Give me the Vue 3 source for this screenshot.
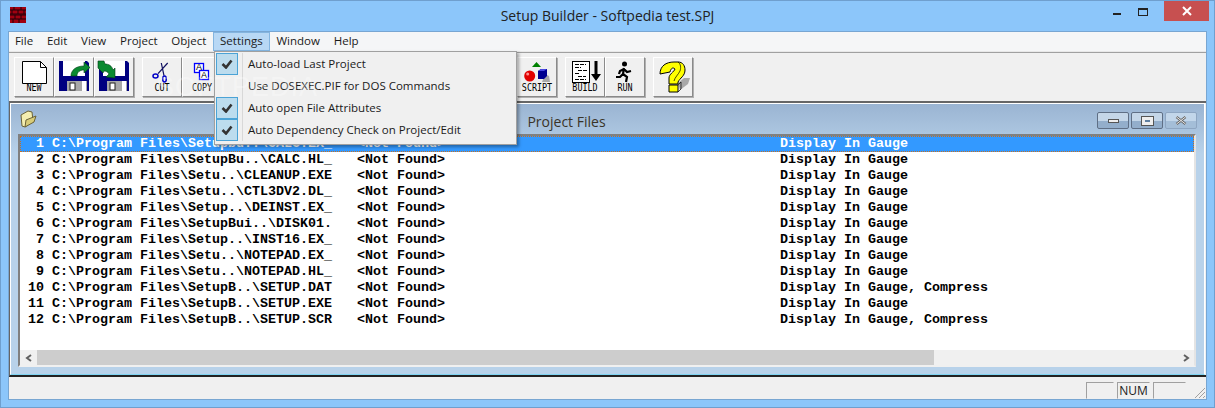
<template>
  <div class="win">
    <div class="titlebar">
      <svg class="app-icon" width="16" height="16" viewBox="0 0 16 16">
        <rect width="16" height="16" fill="#a00010" />
        <path d="M0 3h16M0 7h16M0 8h16M0 12h16M4 0v3M11 0v3M2 3v4M8 3v4M14 3v4M5 8v4M11 8v4M3 12v4M9 12v4" stroke="#200008" stroke-width="1" fill="none" />
      </svg>
      <div class="title">Setup Builder - Softpedia test.SPJ</div>
      <div class="caption">
        <span class="cap-btn"><i class="cap-min"></i></span>
        <span class="cap-btn"><i class="cap-max"></i></span>
        <span class="cap-close">
          <svg width="10" height="10" viewBox="0 0 10 10"><path d="M1 1l8 8M9 1l-8 8" stroke="#fff" stroke-width="2" /></svg>
        </span>
      </div>
    </div>

    <div class="client">
      <div class="menubar">
        <span v-for="m in menus" :key="m" class="menu-item" :class="{ open: m === 'Settings' }">{{ m }}</span>
      </div>

      <div class="toolbar">
        <div class="tool-group">
          <button class="tool">
            <svg width="38" height="38" viewBox="0 0 38 38">
              <path d="M7.500 3.500h18l6 6v16h-24z" fill="#fff" stroke="#000" />
              <path d="M25.500 3.500v6h6" fill="none" stroke="#000" />
            </svg>
            <span class="tool-label">NEW</span>
          </button>
          <button class="tool">
            <svg width="38" height="38" viewBox="0 0 38 38">
              <path d="M4 3h28l2 2v28H4z" fill="#000080" />
              <rect x="8" y="3" width="22" height="15" fill="#fff" />
              <rect x="12" y="23" width="20" height="10" fill="#a8a8a8" />
              <rect x="15" y="25" width="5" height="7" fill="#fff" stroke="#202020" />
              <rect x="27" y="23" width="4" height="10" fill="#fff" />
              <path d="M16 18c0-6 5-10 13-10V4l6 5.500-6 5.500v-3c-4 0-7 2-7 6z" fill="#0a8a30" stroke="#003a14" stroke-width=".6" />
            </svg>
          </button>
          <button class="tool">
            <svg width="38" height="38" viewBox="0 0 38 38">
              <path d="M4 3h28l2 2v28H4z" fill="#000080" />
              <rect x="8" y="3" width="22" height="15" fill="#fff" />
              <rect x="12" y="23" width="20" height="10" fill="#a8a8a8" />
              <rect x="15" y="25" width="5" height="7" fill="#fff" stroke="#202020" />
              <rect x="27" y="23" width="4" height="10" fill="#fff" />
              <path d="M3 3h6l1 3c4 0 7 2 8 6l2-2v10l-9-1 3-3c-1-2-3-3-5-3l-1 2-5-5z" fill="#0a8a30" stroke="#003a14" stroke-width=".6" />
            </svg>
          </button>
        </div>
        <div class="tool-group">
          <button class="tool">
            <svg width="38" height="38" viewBox="0 0 38 38">
              <path d="M24.700 5L15 15.700M18.300 5L21 17.700" stroke="#101060" stroke-width="1.200" fill="none" />
              <ellipse cx="12.500" cy="18" rx="2.500" ry="2" fill="none" stroke="#0000c8" stroke-width="1.500" />
              <ellipse cx="21.500" cy="21" rx="1.800" ry="3" fill="none" stroke="#0000c8" stroke-width="1.500" />
            </svg>
            <span class="tool-label">CUT</span>
          </button>
          <button class="tool">
            <svg width="38" height="38" viewBox="0 0 38 38">
              <rect x="11.500" y="5.500" width="9" height="9" fill="#fff" stroke="#0000ff" stroke-width="1.300" />
              <rect x="16.500" y="12.500" width="9" height="9" fill="#fff" stroke="#0000ff" stroke-width="1.300" />
            </svg>
            <span class="tool-glyph a1">A</span>
            <span class="tool-glyph a2">A</span>
            <span class="tool-label">COPY</span>
          </button>
        </div>
        <div class="tool-group pushed">
          <button class="tool">
            <svg width="38" height="38" viewBox="0 0 38 38">
              <path d="M14 9l4.500-5 4.500 5z" fill="#008000" />
              <path d="M27 16l4 2 1 6h-8z" fill="#a8a8a8" />
              <circle cx="11.700" cy="18" r="5.500" fill="#e00000" />
              <circle cx="9.700" cy="16" r="1.500" fill="#ff9090" />
              <path d="M20 13l3-2h6v7l-3 3h-6z" fill="#000090" />
              <path d="M23 11h6l-3 2h-6z" fill="#4848e0" />
            </svg>
            <span class="tool-label">SCRIPT</span>
          </button>
        </div>
        <div class="tool-group">
          <button class="tool">
            <svg width="38" height="38" viewBox="0 0 38 38">
              <rect x="6.500" y="3.500" width="17" height="21" fill="#fff" stroke="#000" />
              <path d="M9 6.500h11M9 9.500h6M12 12.500h9M9 15.500h5M12 18.500h8M9 21.500h11" stroke="#000" stroke-dasharray="4 1" />
              <path d="M28.500 3h3v13h3.500l-5 7-5-7h3.500z" fill="#000" />
            </svg>
            <span class="tool-label">BUILD</span>
          </button>
          <button class="tool">
            <svg width="38" height="38" viewBox="0 0 38 38">
              <circle cx="18.500" cy="6" r="2.500" fill="#000" />
              <path d="M18 10l-1 6 4 3-1 5M17 16l-3 3-4 0M18 11l-4 2-1 3M18 11l3 3 4-1" stroke="#000" stroke-width="2.200" fill="none" />
            </svg>
            <span class="tool-label">RUN</span>
          </button>
        </div>
        <div class="tool-group">
          <button class="tool">
            <svg width="38" height="38" viewBox="0 0 38 38">
              <path d="M24 25l6-5h6l-2 6-8 6z" fill="#a8a8a8" />
              <path d="M6 16C6 8 12 4 20 4h4c5 0 7 4 7 8 0 6-5 8-7 12v2h-9v-6c0-4 5-6 6-9-2-2-4-1-5 3z" fill="#ffff00" stroke="#000" />
              <path d="M15 27h9v7h-9z" fill="#ffff00" stroke="#000" />
              <path d="M24 4c3 2 3 6 2 9-2 4-5 6-6 10M24 27l3-3v7l-3 3" fill="none" stroke="#000" stroke-width=".7" />
            </svg>
          </button>
        </div>
      </div>

      <div class="mdi">
        <div class="child">
          <div class="child-title">
            <svg class="folder" width="18" height="20" viewBox="0 0 18 20">
              <path d="M1 6l7-4 4 1 1 9-8 6-3-1z" fill="#f4eeb0" stroke="#6a6238" />
              <path d="M5 18l1-7 10-4-2 6z" fill="#d8cc78" stroke="#6a6238" />
            </svg>
            <span class="child-name">Project Files</span>
            <div class="child-btns">
              <span class="mini"><i class="mini-min"></i></span>
              <span class="mini"><i class="mini-max"></i></span>
              <span class="mini off">
                <svg width="12" height="9" viewBox="0 0 12 9"><path d="M1.500 1l9 7M10.500 1l-9 7" stroke="#666" stroke-width="2.500" /><path d="M1.500 1l9 7M10.500 1l-9 7" stroke="#e8e8e8" stroke-width="1" /></svg>
              </span>
            </div>
          </div>
          <div class="list">
            <div class="rows">
              <div v-for="(r, i) in rows" :key="i" class="row" :class="{ sel: i === 0 }">
                <span class="num">{{ i + 1 }}</span>
                <span class="path">{{ r[0] }}</span>
                <span class="found">&lt;Not Found&gt;</span>
                <span>{{ r[1] }}</span>
              </div>
            </div>
            <div class="hscroll">
              <span class="arrow">
                <svg width="8" height="8" viewBox="0 0 8 8"><path d="M6 1L2 4l4 3" fill="none" stroke="#606060" stroke-width="2" /></svg>
              </span>
              <div class="track"><div class="thumb"></div></div>
              <span class="arrow">
                <svg width="8" height="8" viewBox="0 0 8 8"><path d="M2 1l4 3-4 3" fill="none" stroke="#606060" stroke-width="2" /></svg>
              </span>
            </div>
          </div>
        </div>
      </div>

      <div class="statusbar">
        <span class="pane p1"></span>
        <span class="pane p2">NUM</span>
        <span class="pane p3"></span>
        <svg class="grip" width="12" height="12" viewBox="0 0 12 12">
          <path d="M11 1L1 11M11 5l-6 6M11 9l-2 2" stroke="#a0a0a0" fill="none" />
        </svg>
      </div>
    </div>

    <div class="dropdown">
      <div v-for="d in dropdown" :key="d.label" class="drop-item">
        <span class="check" :class="{ on: d.on }">
          <svg v-if="d.on" width="12" height="10" viewBox="0 0 12 10"><path d="M1.500 5l3.500 3.500L10.500 1.500" fill="none" stroke="#333" stroke-width="2.600" /></svg>
        </span>
        <span class="drop-label">{{ d.label }}</span>
      </div>
    </div>
    <div class="watermark">SOFTPEDIA</div>
  </div>
</template>

<script setup>
const menus = ['File', 'Edit', 'View', 'Project', 'Object', 'Settings', 'Window', 'Help']

const dropdown = [
  { label: 'Auto-load Last Project', on: true },
  { label: 'Use DOSEXEC.PIF for DOS Commands', on: false },
  { label: 'Auto open File Attributes', on: true },
  { label: 'Auto Dependency Check on Project/Edit', on: true }
]

const gauge = 'Display In Gauge'
const both = 'Display In Gauge, Compress'

const rows = [
  ['C:\\Program Files\\Setupbu..\\CALC.EX_', gauge],
  ['C:\\Program Files\\SetupBu..\\CALC.HL_', gauge],
  ['C:\\Program Files\\Setu..\\CLEANUP.EXE', gauge],
  ['C:\\Program Files\\Setu..\\CTL3DV2.DL_', gauge],
  ['C:\\Program Files\\Setup..\\DEINST.EX_', gauge],
  ['C:\\Program Files\\SetupBui..\\DISK01.', gauge],
  ['C:\\Program Files\\Setup..\\INST16.EX_', gauge],
  ['C:\\Program Files\\Setu..\\NOTEPAD.EX_', gauge],
  ['C:\\Program Files\\Setu..\\NOTEPAD.HL_', gauge],
  ['C:\\Program Files\\SetupB..\\SETUP.DAT', both],
  ['C:\\Program Files\\SetupB..\\SETUP.EXE', gauge],
  ['C:\\Program Files\\SetupB..\\SETUP.SCR', both]
]
</script>

<style>
html, body {
  margin: 0;
  background: #8cc6fa;
}
</style>

<style scoped>
.win {
  position: relative;
  width: 1215px;
  height: 408px;
  box-sizing: border-box;
  display: flex;
  flex-direction: column;
  background: #8cc6fa;
  border: 1px solid #6f9fce;
  overflow: hidden;
  font-family: "Open Sans", "Noto Sans", sans-serif;
  color: #1a1a1a;
}

.titlebar {
  height: 30px;
  flex-shrink: 0;
  position: relative;
  display: flex;
  align-items: flex-start;
}

.app-icon {
  margin: 6px 0 0 9px;
}

.title {
  position: absolute;
  left: 0;
  right: 0;
  top: 5px;
  text-align: center;
  font-size: 14px;
  line-height: 20px;
  color: #222;
}

.caption {
  margin-left: auto;
  margin-right: 5px;
  display: flex;
}

.cap-btn {
  width: 26px;
  height: 20px;
  position: relative;
}

.cap-min {
  position: absolute;
  left: 1px;
  top: 12px;
  width: 8px;
  height: 2px;
  background: #222;
}

.cap-max {
  position: absolute;
  left: 0;
  top: 7px;
  width: 8px;
  height: 5px;
  border: 1px solid #222;
  border-top-width: 2px;
}

.cap-close {
  width: 45px;
  height: 20px;
  background: #c75050;
  display: flex;
  align-items: center;
  justify-content: center;
}

.client {
  flex: 1;
  margin: 0 7px 7px 7px;
  display: flex;
  flex-direction: column;
  background: #f0f0f0;
  border: 1px solid #78a6d2;
  min-height: 0;
}

.menubar {
  height: 19px;
  flex-shrink: 0;
  display: flex;
  background: #f5f6f7;
  border-bottom: 1px solid #e8e8e8;
  font-size: 11.500px;
  line-height: 18px;
}

.menu-item {
  padding: 0 6.900px;
}

.menu-item:first-child {
  margin-left: -1px;
}

.menu-item.open {
  background: #b8d8f5;
  box-shadow: inset 0 0 0 1px #84b5e0;
}

.toolbar {
  height: 49px;
  flex-shrink: 0;
  box-sizing: border-box;
  display: flex;
  align-items: flex-start;
  gap: 8px;
  padding: 4px 0 0 5px;
  background: #f0f0f0;
  border-top: 1px solid #a0a0a0;
}

.tool-group {
  display: flex;
}

.tool-group.pushed {
  margin-left: 287px;
}

.tool {
  position: relative;
  width: 40px;
  height: 40px;
  padding: 0;
  margin: 0;
  display: block;
  background: #f0f0f0;
  border: 1px solid;
  border-color: #fff #8a8a8a #8a8a8a #fff;
  box-shadow: 1px 1px 0 #b0b0b0;
}

.tool svg {
  display: block;
}

.tool-label {
  position: absolute;
  left: -10px;
  right: -10px;
  bottom: 4px;
  text-align: center;
  font-family: "DejaVu Sans Mono", monospace;
  font-size: 10.500px;
  line-height: 9px;
  color: #000;
  transform: scaleX(0.8);
}

.tool-glyph {
  position: absolute;
  font-family: "Liberation Sans", sans-serif;
  font-size: 9px;
  line-height: 9px;
  color: #000;
}

.a1 { left: 13px; top: 5px; }
.a2 { left: 18px; top: 13px; }

.mdi {
  flex: 1;
  min-height: 0;
  display: flex;
  border-top: 2px solid #666;
  border-left: 1px solid #666;
  border-bottom: 2px solid #222;
}

.child {
  flex: 1;
  min-width: 0;
  margin: 0 1px 0 0;
  box-sizing: border-box;
  display: flex;
  flex-direction: column;
  padding: 0 7px 7px;
  border: 1px solid #fff;
  border-bottom-color: #7fd4f2;
  background: linear-gradient(#9ab4d2, #b8d2ea 50px);
}

.child-title {
  height: 30px;
  flex-shrink: 0;
  position: relative;
  display: flex;
  align-items: center;
}

.folder {
  margin-left: 2px;
}

.child-name {
  position: absolute;
  left: 0;
  right: 82px;
  top: 8px;
  text-align: center;
  font-size: 14px;
  line-height: 19px;
  color: #3a3428;
}

.child-btns {
  position: absolute;
  right: 0;
  top: 8px;
  display: flex;
  gap: 2px;
}

.mini {
  width: 30px;
  height: 15px;
  border: 1px solid #5f6f85;
  border-radius: 2px;
  background: linear-gradient(#c4d6e8 50%, #93aecb 50%);
  display: flex;
  align-items: center;
  justify-content: center;
}

.mini.off {
  border-color: #8ea6c2;
  background: linear-gradient(#c2d6ea 50%, #a4bed8 50%);
}

.mini-min {
  width: 9px;
  height: 2px;
  background: #eee;
  border: 1px solid #555;
}

.mini-max {
  width: 5px;
  height: 2px;
  border: 3px solid #eee;
  outline: 1px solid #555;
  background: #5f7fa0;
}

.list {
  flex: 1;
  min-height: 0;
  display: flex;
  flex-direction: column;
  background: #fff;
  border-top: 2px solid #808080;
  border-left: 2px solid #808080;
  border-right: 2px solid #e4e4e4;
  border-bottom: 2px solid #f0f0f0;
  margin-right: 1px;
}

.rows {
  flex: 1;
  min-height: 0;
  font-family: "Liberation Mono", monospace;
  font-weight: 700;
  font-size: 13.330px;
  color: #000;
}

.row {
  height: 16px;
  line-height: 15px;
  display: flex;
  white-space: pre;
}

.row.sel {
  background: #3399ff;
  color: #fff;
  outline: 1px dotted #c87020;
  outline-offset: -1px;
}

.num {
  width: 24px;
  text-align: right;
  margin-right: 8px;
}

.path {
  width: 305px;
}

.found {
  width: 423px;
}

.hscroll {
  height: 15px;
  flex-shrink: 0;
  display: flex;
  background: #f0f0f0;
}

.arrow {
  width: 17px;
  display: flex;
  align-items: center;
  justify-content: center;
}

.track {
  flex: 1;
}

.thumb {
  width: 897px;
  height: 100%;
  background: #cdcdcd;
}

.statusbar {
  height: 22px;
  flex-shrink: 0;
  display: flex;
  justify-content: flex-end;
  gap: 3px;
  padding-top: 5px;
  box-sizing: border-box;
  position: relative;
  background: #f0f0f0;
}

.pane {
  height: 17px;
  box-sizing: border-box;
  border: 1px solid;
  border-color: #a0a0a0 #f0f0f0 #f0f0f0 #a0a0a0;
  font-size: 12px;
  line-height: 15px;
  text-align: center;
}

.p1 { width: 28px; }
.p2 { width: 33px; }
.p3 { width: 33px; margin-right: 20px; }

.grip {
  position: absolute;
  right: 0;
  bottom: 0;
}

.dropdown {
  position: absolute;
  left: 213px;
  top: 50px;
  width: 303px;
  height: 94px;
  box-sizing: border-box;
  padding: 1px;
  background: #f0f0f0;
  border: 1px solid #a0a0a0;
  box-shadow: 2px 2px 3px rgba(0, 0, 0, 0.35);
}

.drop-item {
  height: 22px;
  display: flex;
  align-items: center;
  font-size: 11.500px;
  line-height: 21px;
}

.check {
  width: 20px;
  height: 20px;
  margin-right: 4px;
  border: 1px solid transparent;
  display: flex;
  align-items: center;
  justify-content: center;
}

.check.on {
  background: #bcdcee;
  border-color: #4ba3d6;
}

.drop-label {
  height: 22px;
  padding-left: 5px;
  border-left: 1px solid #d8d8d8;
}

.watermark {
  position: absolute;
  left: 155px;
  top: 71px;
  font-family: "Liberation Sans", sans-serif;
  font-size: 27px;
  letter-spacing: 1px;
  color: rgba(255, 255, 255, 0.3);
  pointer-events: none;
}
</style>
